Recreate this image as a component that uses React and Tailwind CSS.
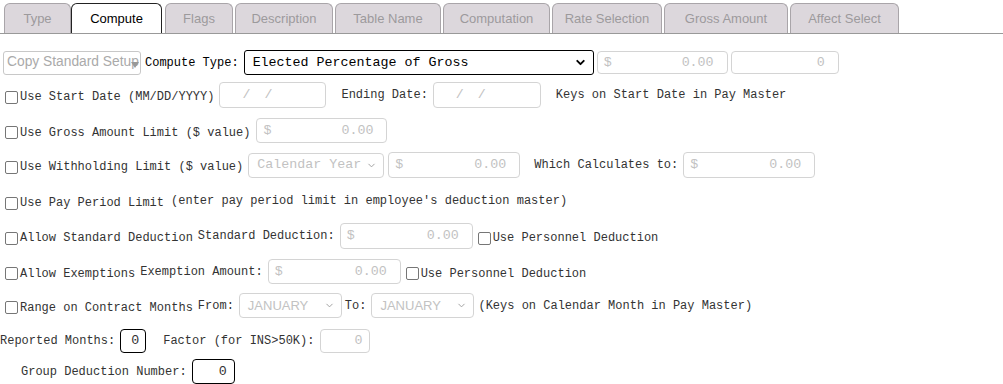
import { ChevronDown } from "lucide-react";

const tabs = [
  { label: "Type", cls: "ml-[4px] w-[67px]" },
  { label: "Compute", cls: "ml-[0px] w-[91px]", active: true },
  { label: "Flags", cls: "ml-[3px] w-[68px]" },
  { label: "Description", cls: "ml-[2px] w-[98px]" },
  { label: "Table Name", cls: "ml-[2px] w-[106px]" },
  { label: "Computation", cls: "ml-[2px] w-[107px]" },
  { label: "Rate Selection", cls: "ml-[2px] w-[110px]" },
  { label: "Gross Amount", cls: "ml-[2px] w-[124px]" },
  { label: "Affect Select", cls: "ml-[2px] w-[109px]" },
];

function Check({ label, cls = "" }) {
  return (
    <span className={"flex items-center mt-[4px] " + cls}>
      <span className="w-[13px] h-[13px] border border-[#767676] rounded-[2px] bg-white ml-[5px] mr-[2px]" />
      <span>{label}</span>
    </span>
  );
}

function Money({ cls = "", value = "0.00", dollar = true }) {
  return (
    <div
      className={
        "flex items-center justify-between border border-[#d4d4d4] rounded-[4px] bg-white text-[#c2c2c2] text-[13.33px] pl-[6px] pr-[13px] " +
        cls
      }
    >
      <span>{dollar ? "$" : ""}</span>
      <span>{value}</span>
    </div>
  );
}

function DisSelect({ cls = "", text, sans }) {
  return (
    <div
      className={
        "flex items-center justify-between border border-[#d4d4d4] rounded-[4px] bg-white text-[#c2c2c2] pl-[8px] pr-[6px] " +
        (sans ? "font-['Liberation_Sans',sans-serif] text-[13px] " : "text-[13.33px] ") +
        cls
      }
    >
      <span>{text}</span>
      <ChevronDown size={11} strokeWidth={2} className="text-[#9a9a9a]" />
    </div>
  );
}

function DateBox({ cls = "" }) {
  return (
    <div className={"flex items-center border border-[#d4d4d4] rounded-[4px] bg-white text-[#c2c2c2] text-[13.33px] " + cls}>
      <span className="ml-[22px]">/</span>
      <span className="ml-[14px]">/</span>
    </div>
  );
}

export default function App() {
  return (
    <div className="w-[1003px] h-[384px] bg-white overflow-hidden font-['Liberation_Mono',monospace] text-[12px] text-[#333]">
      {/* Tabs */}
      <div className="flex items-end h-[34px] border-b border-[#999]">
        {tabs.map((t) => (
          <div
            key={t.label}
            className={
              "h-[30px] flex items-center justify-center rounded-t-[6px] border border-b-0 font-['Liberation_Sans',sans-serif] text-[13px] " +
              t.cls +
              (t.active
                ? " bg-white border-[#222] text-black"
                : " bg-[#dcd7dc] border-[#a9a5a9] text-[#9c9a9c]")
            }
          >
            {t.label}
          </div>
        ))}
      </div>

      {/* Row 1 */}
      <div className="flex items-center h-[25px] mt-[16px]">
        <div className="relative ml-[3px] w-[138px] h-[24px] border border-[#c8c8c8] rounded-[3px] flex items-center pl-[3px] overflow-hidden font-['Liberation_Sans',sans-serif] text-[13.8px] text-[#aaa] whitespace-nowrap">
          Copy Standard Setup
          <svg width="8" height="6" viewBox="0 0 8 6" className="absolute left-[127px] top-[10px]">
            <path d="M0 0 L8 0 L4 6 Z" fill="#999" />
          </svg>
        </div>
        <span className="ml-[4px] text-black">Compute Type:</span>
        <div className="ml-[5px] w-[350px] h-[25px] border border-black rounded-[3px] flex items-center justify-between pl-[8px] pr-[6px] text-[13.33px] text-black">
          <span>Elected Percentage of Gross</span>
          <ChevronDown size={13} strokeWidth={3.5} />
        </div>
        <Money cls="ml-[3px] w-[131px] h-[23px]" />
        <Money cls="ml-[3px] w-[108px] h-[23px]" value="0" dollar={false} />
      </div>

      {/* Row 2 */}
      <div className="flex items-center h-[26px] mt-[7px]">
        <Check label="Use Start Date (MM/DD/YYYY)" />
        <DateBox cls="ml-[5px] w-[107px] h-[26px]" />
        <span className="ml-[15px]">Ending Date:</span>
        <DateBox cls="ml-[5px] w-[108px] h-[26px]" />
        <span className="ml-[15px]">Keys on Start Date in Pay Master</span>
      </div>

      {/* Row 3 */}
      <div className="flex items-center h-[25px] mt-[10px]">
        <Check label="Use Gross Amount Limit ($ value)" />
        <Money cls="ml-[6px] w-[131px] h-[25px]" />
      </div>

      {/* Row 4 */}
      <div className="flex items-center h-[26px] mt-[9px]">
        <Check label="Use Withholding Limit ($ value)" />
        <DisSelect cls="ml-[5px] w-[136px] h-[25px]" text="Calendar Year" />
        <Money cls="ml-[4px] w-[132px] h-[26px]" />
        <span className="ml-[14px]">Which Calculates to:</span>
        <Money cls="ml-[5px] w-[132px] h-[26px]" />
      </div>

      {/* Row 5 */}
      <div className="flex items-center h-[24px] mt-[11px]">
        <Check label="Use Pay Period Limit" />
        <span className="ml-[7px]">(enter pay period limit in employee's deduction master)</span>
      </div>

      {/* Row 6 */}
      <div className="flex items-center h-[26px] mt-[10px]">
        <Check label="Allow Standard Deduction" />
        <span className="ml-[5px]">Standard Deduction:</span>
        <Money cls="ml-[5px] w-[133px] h-[26px]" />
        <Check label="Use Personnel Deduction" cls="mt-0" />
      </div>

      {/* Row 7 */}
      <div className="flex items-center h-[25px] mt-[10px]">
        <Check label="Allow Exemptions" />
        <span className="ml-[5px]">Exemption Amount:</span>
        <Money cls="ml-[5px] w-[133px] h-[25px]" />
        <Check label="Use Personnel Deduction" cls="mt-0" />
      </div>

      {/* Row 8 */}
      <div className="flex items-center h-[25px] mt-[9px]">
        <Check label="Range on Contract Months" />
        <span className="ml-[5px]">From:</span>
        <DisSelect cls="ml-[5px] w-[103px] h-[25px]" text="JANUARY" sans />
        <span className="ml-[3px]">To:</span>
        <DisSelect cls="ml-[5px] w-[103px] h-[25px]" text="JANUARY" sans />
        <span className="ml-[4px]">(Keys on Calendar Month in Pay Master)</span>
      </div>

      {/* Row 9 */}
      <div className="flex items-center h-[24px] mt-[11px]">
        <span>Reported Months:</span>
        <div className="ml-[5px] w-[26px] h-[24px] border border-black rounded-[4px] flex items-center justify-end pr-[6px] text-[13.33px] text-[#333]">
          0
        </div>
        <span className="ml-[17px]">Factor (for INS&gt;50K):</span>
        <div className="ml-[6px] w-[50px] h-[24px] border border-[#d4d4d4] rounded-[4px] flex items-center justify-end pr-[7px] text-[13.33px] text-[#c2c2c2]">
          0
        </div>
      </div>

      {/* Row 10 */}
      <div className="flex items-center h-[25px] mt-[6px]">
        <span className="ml-[21px]">Group Deduction Number:</span>
        <div className="ml-[5px] w-[43px] h-[25px] border border-black rounded-[4px] flex items-center justify-end pr-[7px] text-[13.33px] text-[#333]">
          0
        </div>
      </div>
    </div>
  );
}
